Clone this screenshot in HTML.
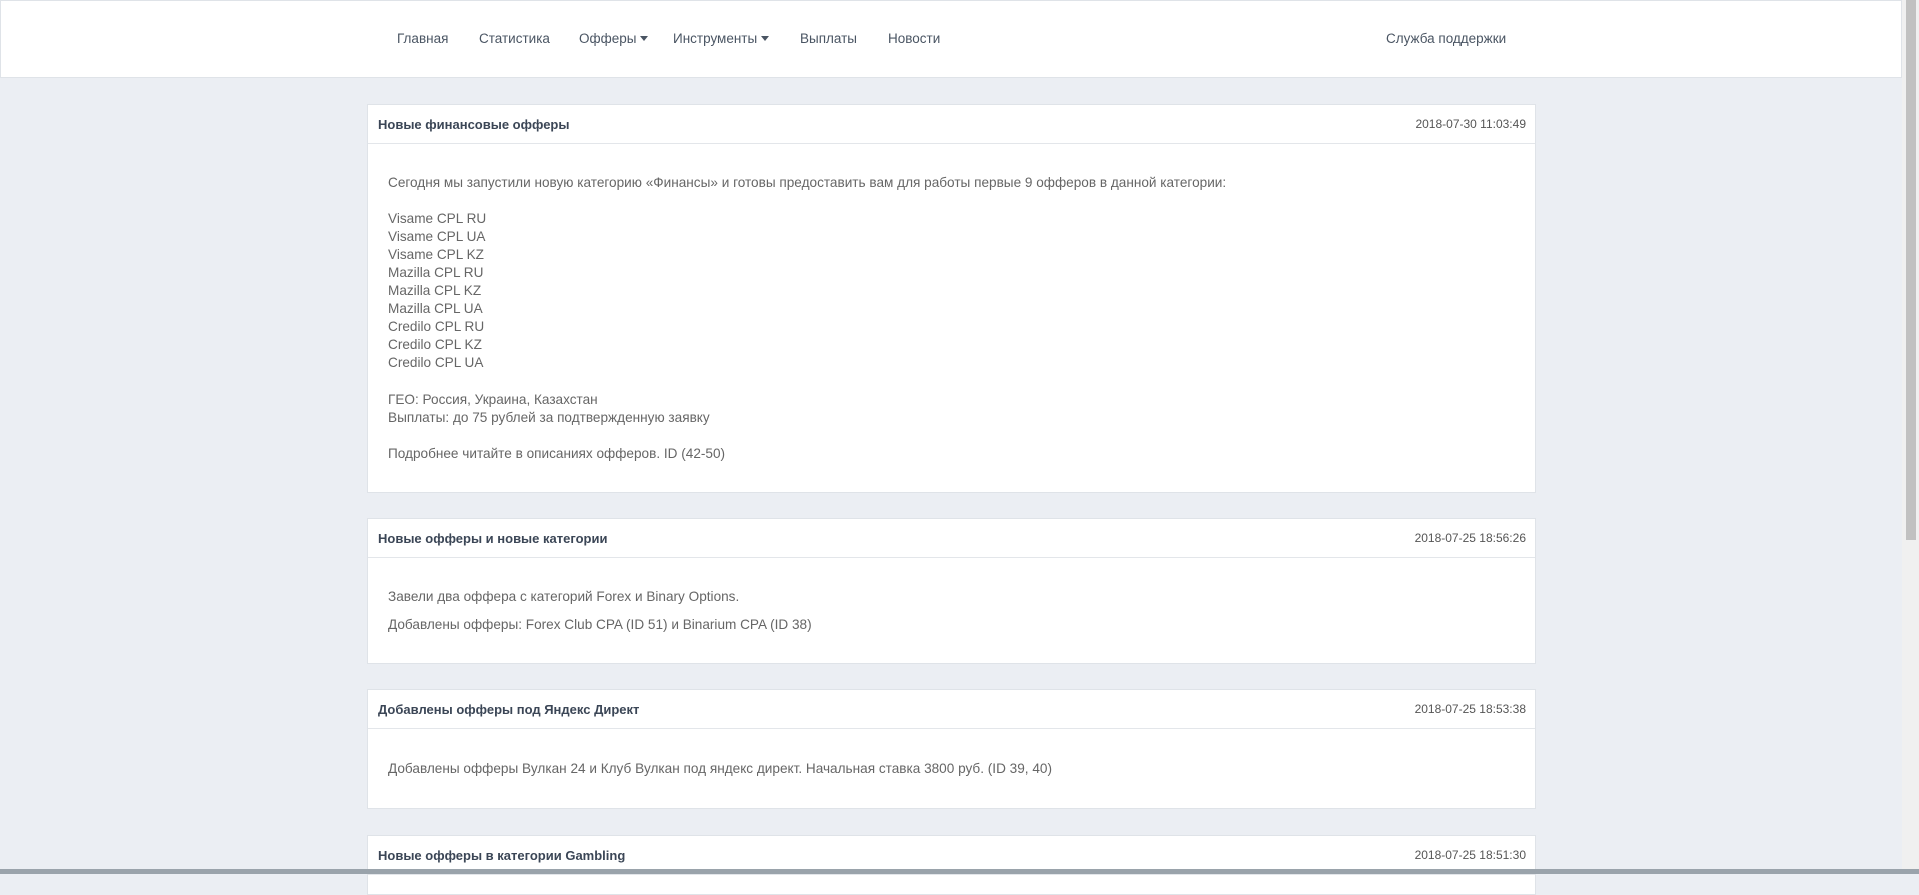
<!DOCTYPE html>
<html><head><meta charset="utf-8"><style>
*{margin:0;padding:0;box-sizing:border-box}
body{width:1919px;height:874px;overflow:hidden;background:#ebeef3;font-family:"Liberation Sans",sans-serif;position:relative}
.hdr{position:absolute;left:0;top:0;width:1902px;height:78px;background:#fff;border:1px solid #dfe3e8}
.nav{position:absolute;top:30px;font-size:13.5px;color:#4a5563;white-space:nowrap}
.car{display:inline-block;width:0;height:0;border-left:4px solid transparent;border-right:4px solid transparent;border-top:5px solid #4a5563;vertical-align:2px;margin-left:4px}
.sb{position:absolute;right:0;top:0;width:17px;height:869px;background:#f0f0f0}
.sb div{position:absolute;left:4px;top:0;width:10px;height:540px;background:#c1c1c1}
.card{position:absolute;left:367px;width:1169px;background:#fff;border:1px solid #dfe3e8}
.ch{height:39px;border-bottom:1px solid #e3e6ea;position:relative}
.ch .t{position:absolute;left:10px;top:12px;font-size:13px;font-weight:bold;color:#3b4656}
.ch .d{position:absolute;right:9px;top:12px;font-size:12px;color:#555}
.tx{position:absolute;left:20px;font-size:13.6px;color:#666;line-height:18px;white-space:nowrap}
.bb{position:absolute;left:0;top:869px;width:1919px;height:5px;background:#9aa3ab}
</style></head><body>
<div class="hdr">
<span class="nav" style="left:396px">Главная</span>
<span class="nav" style="left:478px">Статистика</span>
<span class="nav" style="left:578px">Офферы<i class="car"></i></span>
<span class="nav" style="left:672px">Инструменты<i class="car"></i></span>
<span class="nav" style="left:799px">Выплаты</span>
<span class="nav" style="left:887px">Новости</span>
<span class="nav" style="left:1385px">Служба поддержки</span>
</div>
<div class="sb"><div></div></div>

<div class="card" style="top:104px;height:389px">
<div class="ch"><span class="t">Новые финансовые офферы</span><span class="d">2018-07-30 11:03:49</span></div>
<div class="tx" style="top:69px">Сегодня мы запустили новую категорию «Финансы» и готовы предоставить вам для работы первые 9 офферов в данной категории:</div>
<div class="tx" style="top:105px">Visame CPL RU<br>Visame CPL UA<br>Visame CPL KZ<br>Mazilla CPL RU<br>Mazilla CPL KZ<br>Mazilla CPL UA<br>Credilo CPL RU<br>Credilo CPL KZ<br>Credilo CPL UA</div>
<div class="tx" style="top:286px">ГЕО: Россия, Украина, Казахстан<br>Выплаты: до 75 рублей за подтвержденную заявку</div>
<div class="tx" style="top:340px">Подробнее читайте в описаниях офферов. ID (42-50)</div>
</div>

<div class="card" style="top:518px;height:146px">
<div class="ch"><span class="t">Новые офферы и новые категории</span><span class="d">2018-07-25 18:56:26</span></div>
<div class="tx" style="top:69px">Завели два оффера с категорий Forex и Binary Options.</div>
<div class="tx" style="top:97px">Добавлены офферы: Forex Club CPA (ID 51) и Binarium CPA (ID 38)</div>
</div>

<div class="card" style="top:689px;height:120px">
<div class="ch"><span class="t">Добавлены офферы под Яндекс Директ</span><span class="d">2018-07-25 18:53:38</span></div>
<div class="tx" style="top:70px">Добавлены офферы Вулкан 24 и Клуб Вулкан под яндекс директ. Начальная ставка 3800 руб. (ID 39, 40)</div>
</div>

<div class="card" style="top:835px;height:60px">
<div class="ch"><span class="t">Новые офферы в категории Gambling</span><span class="d">2018-07-25 18:51:30</span></div>
</div>
<div class="bb"></div>
</body></html>
